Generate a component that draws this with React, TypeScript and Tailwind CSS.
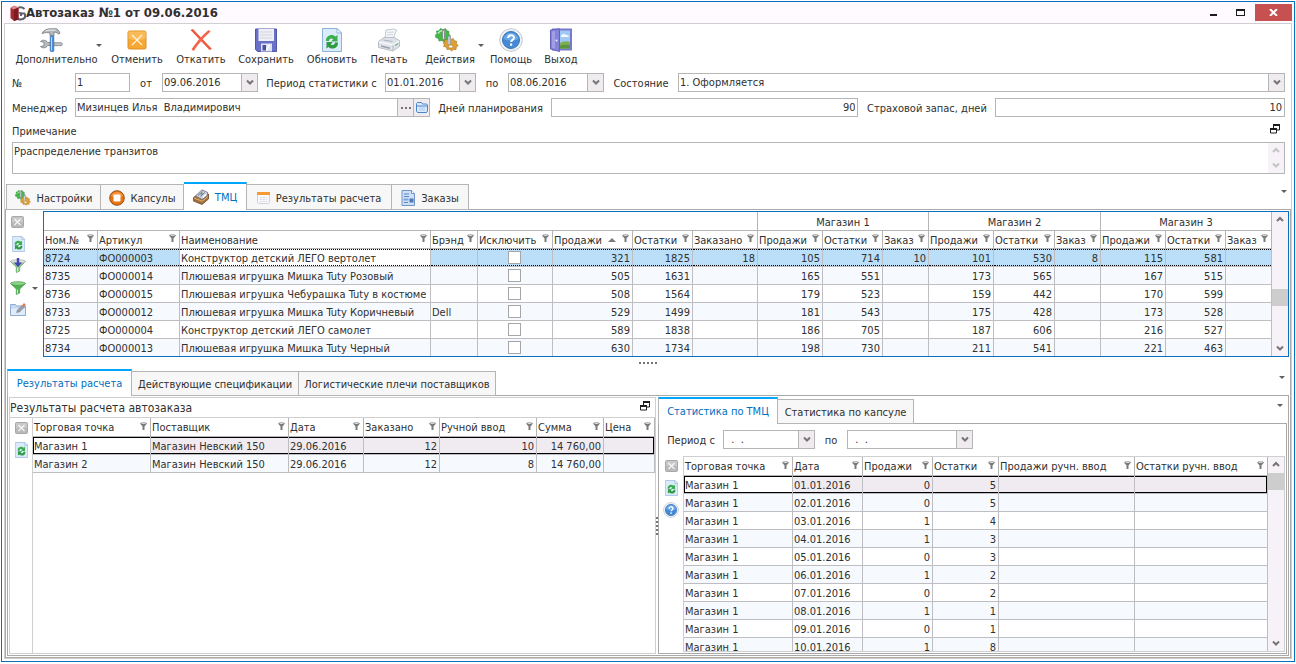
import { useState } from "react";
import type { ReactNode } from "react";

interface Column {
  title: string;
  width: string;
  align?: "right";
  sorted?: boolean;
}

const goodsColumns: Column[] = [
  { title: "Ном.№", width: "w-[54px]" },
  { title: "Артикул", width: "w-[82px]" },
  { title: "Наименование", width: "w-auto" },
  { title: "Брэнд", width: "w-[47px]" },
  { title: "Исключить", width: "w-[75px]" },
  { title: "Продажи", width: "w-[80px]", align: "right", sorted: true },
  { title: "Остатки", width: "w-[60px]", align: "right" },
  { title: "Заказано", width: "w-[65px]", align: "right" },
  { title: "Продажи", width: "w-[65px]", align: "right" },
  { title: "Остатки", width: "w-[60px]", align: "right" },
  { title: "Заказ", width: "w-[46px]", align: "right" },
  { title: "Продажи", width: "w-[65px]", align: "right" },
  { title: "Остатки", width: "w-[61px]", align: "right" },
  { title: "Заказ", width: "w-[46px]", align: "right" },
  { title: "Продажи", width: "w-[65px]", align: "right" },
  { title: "Остатки", width: "w-[60px]", align: "right" },
  { title: "Заказ", width: "w-[46px]", align: "right" },
];

// the fifth value is the "Исключить" tick box
const goodsRows: string[][] = [
  ["8724", "ФО000003", "Конструктор детский ЛЕГО вертолет", "", "", "321", "1825", "18", "105", "714", "10", "101", "530", "8", "115", "581", ""],
  ["8735", "ФО000014", "Плюшевая игрушка Мишка Tuty Розовый", "", "", "505", "1631", "", "165", "551", "", "173", "565", "", "167", "515", ""],
  ["8736", "ФО000015", "Плюшевая игрушка Чебурашка Tuty в костюме", "", "", "508", "1564", "", "179", "523", "", "159", "442", "", "170", "599", ""],
  ["8733", "ФО000012", "Плюшевая игрушка Мишка Tuty Коричневый", "Dell", "", "529", "1499", "", "181", "543", "", "175", "428", "", "173", "528", ""],
  ["8725", "ФО000004", "Конструктор детский ЛЕГО самолет", "", "", "589", "1838", "", "186", "705", "", "187", "606", "", "216", "527", ""],
  ["8734", "ФО000013", "Плюшевая игрушка Мишка Tuty Черный", "", "", "630", "1734", "", "198", "730", "", "211", "541", "", "221", "463", ""],
];

const resultColumns: Column[] = [
  { title: "Торговая точка", width: "w-[118px]" },
  { title: "Поставщик", width: "w-auto" },
  { title: "Дата", width: "w-[75px]" },
  { title: "Заказано", width: "w-[76px]", align: "right" },
  { title: "Ручной ввод", width: "w-[97px]", align: "right" },
  { title: "Сумма", width: "w-[67px]", align: "right" },
  { title: "Цена", width: "w-[51px]", align: "right" },
];

const resultRows: string[][] = [
  ["Магазин 1", "Магазин Невский 150", "29.06.2016", "12", "10", "14 760,00", ""],
  ["Магазин 2", "Магазин Невский 150", "29.06.2016", "12", "8", "14 760,00", ""],
];

const statColumns: Column[] = [
  { title: "Торговая точка", width: "w-[109px]" },
  { title: "Дата", width: "w-[70px]" },
  { title: "Продажи", width: "w-[70px]", align: "right" },
  { title: "Остатки", width: "w-[66px]", align: "right" },
  { title: "Продажи ручн. ввод", width: "w-[136px]", align: "right" },
  { title: "Остатки ручн. ввод", width: "w-auto", align: "right" },
];

const statRows: string[][] = [
  ["Магазин 1", "01.01.2016", "0", "5", "", ""],
  ["Магазин 1", "02.01.2016", "0", "5", "", ""],
  ["Магазин 1", "03.01.2016", "1", "4", "", ""],
  ["Магазин 1", "04.01.2016", "1", "3", "", ""],
  ["Магазин 1", "05.01.2016", "0", "3", "", ""],
  ["Магазин 1", "06.01.2016", "1", "2", "", ""],
  ["Магазин 1", "07.01.2016", "0", "2", "", ""],
  ["Магазин 1", "08.01.2016", "1", "1", "", ""],
  ["Магазин 1", "09.01.2016", "0", "1", "", ""],
  ["Магазин 1", "10.01.2016", "1", "8", "", ""],
];

/* ---------- icons ---------- */

function LogoIcon() {
  return (
    <svg width="16" height="16" viewBox="0 0 16 16">
      <path d="M14.500 4C13 2.500 10.500 2 8.500 2.500M15 8.500h-4v2.500M15 8.500v4c-2 2-5 2.300-7 1.500" fill="none" stroke="#59636b" strokeWidth="2" />
      <path d="M.5 3L4 .8l4.500 1.700v12L4 16 .5 13z" fill="#a3282f" />
      <path d="M.5 3L4 .8l4.500 1.700L4 4.500z" fill="#d98a8d" />
      <path d="M4 4.500l4.500-2v12L4 16z" fill="#7d1c22" />
      <path d="M9 8h2.500" stroke="#59636b" strokeWidth="1.500" />
    </svg>
  );
}

function ToolsIcon() {
  return (
    <svg width="24" height="24" viewBox="0 0 24 24">
      <path d="M3 5.500C4.500 2.200 8 .8 11 .8h6c1.500 0 3 1.500 4 4.500l-1.500.7-2.500-1.800h-2V8H11V5.200C8.500 4.200 6.500 4.500 3 5.500z" fill="#b4b7ba" stroke="#75797d" strokeWidth=".8" />
      <path d="M6.500 3c2-1 6-1.200 10-.8" stroke="#f3f4f5" fill="none" />
      <rect x="11.200" y="8" width="3.600" height="15.500" rx="1" fill="#4a90dd" stroke="#2f66aa" strokeWidth=".7" />
      <path d="M12.500 9v13.500" stroke="#b2d8fb" strokeWidth="1" />
      <path d="M1.500 13.500c2-2 5.500-1.700 7.200 1h2.300v3H8.700c-1.700 2.800-5.200 3-7.200 1l3.500-.7v-3.500z" fill="#b9bcbf" stroke="#75797d" strokeWidth=".8" />
      <path d="M15 14.800h7.500c1 .5 1 2.300 0 2.800H15z" fill="#c9ccce" stroke="#75797d" strokeWidth=".8" />
    </svg>
  );
}

function CancelIcon() {
  return (
    <svg width="20" height="20" viewBox="0 0 20 20">
      <rect x="1" y="1" width="18" height="18" rx="1.500" fill="#f5a833" stroke="#e08f22" />
      <path d="M1.500 1.500h17v7c-5 2-12 2-17 0z" fill="#f9bb59" />
      <path d="M5 5l10 10M15 5L5 15" stroke="#fff3da" strokeWidth="1.300" />
    </svg>
  );
}

function RollbackIcon() {
  return (
    <svg width="24" height="24" viewBox="0 0 24 24">
      <path d="M1.500 2L4 1c5 5.500 13 13.500 19 20l-2.500 1C15 16 7 8 1.500 2z" fill="#f0593f" />
      <path d="M19.500 2l2 1.500C15.500 9 8.500 16.500 5 23l-2.500-1.500C6 15.500 13 7.500 19.500 2z" fill="#f4644a" />
    </svg>
  );
}

function SaveIcon() {
  return (
    <svg width="22" height="24" viewBox="0 0 22 24">
      <path d="M.5 1h21v22.500H2.500l-2-2z" fill="#6a70c8" stroke="#5057ad" />
      <rect x="3.500" y="1" width="15.500" height="12" fill="#eeeff4" />
      <path d="M5 4h12M5 7h12M5 10h12" stroke="#d3d4df" />
      <rect x="6" y="15.500" width="11" height="8" fill="#dfe1ee" />
      <path d="M7.500 17h3.500v5.500H7.500z" fill="#4a50a3" />
      <path d="M14.500 16.500l-3 6" stroke="#fff" strokeWidth="1.500" />
    </svg>
  );
}

function RefreshIcon({ className }: { className: string }) {
  return (
    <svg className={className} viewBox="0 0 20 24">
      <path d="M.5.500h14.500l4.500 4.500v18.500H.5z" fill="#dcebfa" stroke="#8fb2dc" />
      <path d="M15 .5V5h4.500z" fill="#fff" stroke="#8fb2dc" />
      <path d="M4 13c-.5-5.500 6-8 9.500-4.500L15.500 7v6.500H9.200l2-2.200c-1.800-1.700-4.200-.6-4.200 1.700z" fill="#3bae4e" />
      <path d="M16 14.500c.5 5.500-6 8-9.500 4.500l-2 1.500V14h6.300l-2 2.200c1.800 1.700 4.200.6 4.200-1.700z" fill="#2c9b41" />
    </svg>
  );
}

function PrintIcon() {
  return (
    <svg width="24" height="24" viewBox="0 0 24 24">
      <path d="M9 2l8-1 3 1.500-1.500 1.500L16 12l-8-1z" fill="#f4f6fa" stroke="#b2bac5" strokeWidth=".8" />
      <path d="M10.500 4.500l6-.5M10 7l6-.5" stroke="#cfd5de" />
      <path d="M1.500 13.500L7 9.500h10l5.500 3v6L16 23 1.500 19.500z" fill="#dfe3e9" stroke="#a9b1bc" strokeWidth=".8" />
      <path d="M2 14l14 3 6-4" fill="none" stroke="#fff" />
      <path d="M16 17v6" stroke="#b5bcc6" />
      <path d="M4 17.200l9 2.300v1.500l-9-2.300z" fill="#96a0ac" />
      <path d="M6.500 12l9 1.500" stroke="#aab3bd" />
      <path d="M18 17.500l3-2" stroke="#6dbd78" strokeWidth="1.500" />
    </svg>
  );
}

function GearsIcon({ className }: { className: string }) {
  return (
    <svg className={className} viewBox="0 0 24 24">
      <path d="M.5 7l1.500-1.500L1.500 3l2.500-.2L5.500.5 8 1.800 10.500.5l1.500 2.300 2 .7-.2 2.500L15.500 8l-1.500 1.800-.5 2.700-2.500-.2L9 14l-2-1.500-3 .5-.5-2.500L.8 9.500z" fill="#45b649" stroke="#2b8a35" strokeWidth=".6" />
      <path d="M3 5.500c1.500-2.500 4-3 6-2.500" stroke="#b7eeb0" strokeWidth="1.500" fill="none" />
      <path d="M7 2.500L9.500 1l1.500 1v8l-2 1.500H7.500z" fill="#8a9295" />
      <path d="M8.500 3v8" stroke="#dfe3e4" strokeWidth="1" />
      <path d="M8 15l1.800-1-.3-2.300 2.500.2 1.600-2 2 1.500 2.700-.9 1 2.200 2.500.6-.5 2.500 2 1.700-2 1.500-.2 2.500-2.500-.1-2 1.600-1.900-1.700-2.700.3-.6-2.500L8.500 18.500l.8-2z" fill="#dda035" stroke="#aa7422" strokeWidth=".6" />
      <path d="M13.500 18.500c0-2 4.500-2 4.500 0s-4.500 2-4.500 0z" fill="#fff" stroke="#aa7422" strokeWidth=".7" />
      <path d="M13 8l2-.8 1 .8v7.500l-1.500 1H13z" fill="#9da4a8" />
      <path d="M14 9v7" stroke="#e8ebec" />
    </svg>
  );
}

function HelpIcon({ className }: { className: string }) {
  return (
    <svg className={className} viewBox="0 0 24 24">
      <circle cx="12" cy="12" r="11.300" fill="#f0f2f5" stroke="#c3c8ce" />
      <circle cx="12" cy="12" r="8.500" fill="#4389d6" stroke="#3a76bd" />
      <path d="M4.500 11a7.600 7.600 0 0 1 15 0c-4.500 2-10 2-15 0z" fill="#6ba7e6" />
      <path d="M9.200 10c0-3.800 5.800-3.600 5.800-.3 0 2.200-2.900 2.200-2.900 4.300" fill="none" stroke="#fff" strokeWidth="2" />
      <rect x="11" y="15.500" width="2.200" height="2.200" fill="#fff" />
    </svg>
  );
}

function ExitIcon() {
  return (
    <svg width="22" height="24" viewBox="0 0 22 24">
      <rect x="3" y="1.500" width="18" height="20" fill="#9fc9f5" stroke="#7a78cf" strokeWidth="2" />
      <path d="M11 8c1-2.500 4-2.500 5-1 2-.5 3 1 3 2h-8z" fill="#f4f9ff" />
      <path d="M9 15.500c4-2 7-3 11-1.500v6.500H9z" fill="#7dae55" />
      <path d="M9 18c4-1.500 7-1.500 11-1v3.500H9z" fill="#5c9440" />
      <path d="M.5 2L9.500.800v22.700L.5 21z" fill="#8683db" stroke="#6461b8" />
      <path d="M2 3.500l3-.5v17.500l-3-.5z" fill="#a19ee6" />
      <circle cx="6.500" cy="12.500" r="1" fill="#f2f1fc" />
    </svg>
  );
}

function StopIcon() {
  return (
    <svg width="16" height="16" viewBox="0 0 16 16">
      <circle cx="8" cy="8" r="7.300" fill="#e8750f" stroke="#8a4712" strokeWidth=".9" />
      <path d="M2 6a6.500 6.500 0 0 1 12 0c-4 2-8 2-12 0z" fill="#f9943a" />
      <rect x="4.500" y="4.500" width="7" height="7" rx="1" fill="#fff" />
    </svg>
  );
}

function GoodsIcon() {
  return (
    <svg width="16" height="16" viewBox="0 0 16 16">
      <path d="M.5 8.500L4 6l6 3 5.500-4v5L9 15.500.5 12z" fill="#a8703a" stroke="#6b4722" strokeWidth=".8" />
      <path d="M1 9l8.200 3.200L15 7.500" fill="none" stroke="#e0b37c" />
      <path d="M2.500 7L9 .8l5.500 2.500v3L9 10.500z" fill="#cdd2d9" stroke="#666d77" strokeWidth=".8" />
      <path d="M5 6.500l4.500-4M7.300 7.500l4.500-4" stroke="#7b71b8" />
      <path d="M10 8.500l3-3" stroke="#fff" strokeWidth="1.500" />
      <path d="M7.500 5.500l2-1.800" stroke="#5aa95c" strokeWidth="1.500" />
    </svg>
  );
}

function CalendarIcon() {
  return (
    <svg width="13" height="14" viewBox="0 0 13 14">
      <rect x=".5" y="1.500" width="12" height="11" rx="1" fill="#f8f8fa" stroke="#cfd2d8" />
      <path d="M0 1h13v3H0z" fill="#f59a32" />
      <path d="M3 6.500h7M3 8.500h7M3 10.500h7" stroke="#d3dae4" strokeDasharray="2 1" />
    </svg>
  );
}

function DocumentIcon() {
  return (
    <svg width="14" height="16" viewBox="0 0 14 16">
      <path d="M1 .5h9.500l3 3v12H1z" fill="#cfe0f6" stroke="#7094c8" />
      <path d="M10.500.5v3h3" fill="#fff" stroke="#7094c8" />
      <path d="M3 4h5M3 6.500h5M3 12.500h4" stroke="#5b86c4" />
      <path d="M2.500 8.500h5v2h-5z" fill="#7ba4dc" />
      <path d="M8.500 8.500h4v4h-4z" fill="#4f79b6" />
    </svg>
  );
}

function DeleteIcon() {
  return (
    <svg width="13" height="12" viewBox="0 0 13 12">
      <rect x=".5" y=".5" width="12" height="11" rx="1" fill="#b9b9b9" stroke="#a8a8a8" />
      <path d="M1 1h11v5H1z" fill="#c8c8c8" />
      <path d="M3.500 3l6 6M9.500 3l-6 6" stroke="#f7f7f7" strokeWidth="1.200" />
    </svg>
  );
}

function FunnelIcon({ arrow }: { arrow?: boolean }) {
  return (
    <svg width="16" height="16" viewBox="0 0 16 16">
      <path d="M.5 3.500L6.300 9v5.500l3.400-1.500V9l5.800-5.500z" fill={arrow ? "#9ecf9b" : "#4db351"} stroke="#4a9a4d" strokeWidth=".7" />
      <ellipse cx="8" cy="3.500" rx="7.500" ry="1.800" fill={arrow ? "#dde5dd" : "#8fd48c"} stroke={arrow ? "#a3aaa3" : "#4a9a4d"} strokeWidth=".7" />
      <path d="M7.500 9.500v4" stroke="#c6efc3" />
      {arrow && <path d="M6.800 0h2.400v4.500H12L8 9.200 4 4.500h2.800z" fill="#4147b5" />}
    </svg>
  );
}

function EditIcon() {
  return (
    <svg width="16" height="15" viewBox="0 0 16 15">
      <path d="M.5 13.500v-11h5l1 1.500h9v9.500z" fill="#c5d9f1" stroke="#8fabd2" />
      <path d="M1 6.500h14V13H1z" fill="#dfecfb" />
      <path d="M6.500 10.500l1-2.500 5-5 2 2-5 5z" fill="#98a0ab" stroke="#6e7783" strokeWidth=".5" />
      <path d="M12 3.500L14 1l1.800 1.800-1.800 2.200z" fill="#e07a4a" />
    </svg>
  );
}

function FolderIcon() {
  return (
    <svg width="12" height="11" viewBox="0 0 12 11">
      <path d="M.5 9V1.500l1-1h4l1 1.500h4l1 1V9l-1 1.500h-9z" fill="#dcebfb" stroke="#4a83cc" />
      <path d="M1 4h10" stroke="#4a83cc" />
      <path d="M3 6h6M3 8h6" stroke="#a9c8ee" />
    </svg>
  );
}

function RestoreIcon() {
  return (
    <svg width="11" height="10" viewBox="0 0 11 10">
      <path d="M3.500 4V1h6v5h-3" fill="none" stroke="#1c1c1c" />
      <path d="M3 1h7" stroke="#1c1c1c" strokeWidth="2" />
      <path d="M.5 4.500h6v4.500h-6z" fill="#fff" stroke="#1c1c1c" />
      <path d="M0 5h7" stroke="#1c1c1c" strokeWidth="2" />
    </svg>
  );
}

function FilterMark() {
  return (
    <svg width="7" height="8" viewBox="0 0 7 8" className="shrink-0 self-start">
      <path d="M0 1.500L1.500.5h4L7 1.500 4.500 4.500V8h-2V4.500z" fill="#7b7b7b" />
      <path d="M1.500 1.500h4" stroke="#d5d5d5" />
    </svg>
  );
}

function Triangle({ up }: { up?: boolean }) {
  return (
    <svg width={up ? 8 : 6} height={up ? 4 : 3} viewBox="0 0 6 3" preserveAspectRatio="none" className="shrink-0">
      <path d={up ? "M0 3h6L3 0z" : "M0 0h6L3 3z"} fill={up ? "#7b7b7b" : "#5f5f5f"} />
    </svg>
  );
}

function Chevron({ up, color = "#757575" }: { up?: boolean; color?: string }) {
  return (
    <svg width="8" height="7" viewBox="0 0 8 7" className="shrink-0">
      <path d={up ? "M1 5l3-3 3 3" : "M1 1.500l3 3 3-3"} fill="none" stroke={color} strokeWidth="2" />
    </svg>
  );
}

/* ---------- controls ---------- */

const fieldBox = "h-[19px] border border-[#b5b5b5] bg-white";

function DropButton({ label }: { label: string }) {
  return (
    <button aria-label={label} className="flex w-4 shrink-0 items-center justify-center border-l border-[#b5b5b5] bg-[#efebef]">
      <Chevron />
    </button>
  );
}

function DateField({ id, label, value, width }: { id: string; label: string; value: string; width: string }) {
  return (
    <div className={`flex ${fieldBox} ${width}`}>
      <input id={id} aria-label={label} defaultValue={value} className="w-full min-w-0 flex-1 pl-px outline-none" />
      <DropButton label={`${label}: календарь`} />
    </div>
  );
}

function ToolButton({ label, width, menu, children }: { label: string; width: string; menu?: boolean; children: ReactNode }) {
  return (
    <button className={`flex h-11 shrink-0 flex-col items-center ${width}`}>
      <span className={`grid h-[25px] w-full items-center ${menu ? "grid-cols-[3fr_auto_4fr]" : "grid-cols-[1fr_auto_1fr]"}`}>
        <span />
        {children}
        <span className="justify-self-end pt-3 pr-[2px]">{menu && <Triangle />}</span>
      </span>
      <span className="mt-px leading-[14px]">{label}</span>
    </button>
  );
}

interface TabItem {
  title: string;
  width: string;
  icon?: ReactNode;
}

interface TabBarProps {
  tabs: TabItem[];
  active: number;
  tall?: boolean;
  onSelect: (i: number) => void;
}

function TabBar({ tabs, active, tall, onSelect }: TabBarProps) {
  return (
    <div className={`flex items-end ${tall ? "h-[27px]" : "h-[26px]"}`}>
      <div role="tablist" className={`relative z-10 -mb-px flex items-end ${tall ? "h-[28px]" : "h-[27px]"}`}>
        {tabs.map((tab, i) => (
          <button
            key={tab.title}
            role="tab"
            aria-selected={i === active}
            onClick={() => onSelect(i)}
            className={`flex items-center justify-center gap-[6px] border-r border-[#b5b5b5] ${tab.width} ${
              i === active
                ? "h-full border-t-2 border-t-[#00a6f9] bg-white text-[#0070c0]"
                : `border-t border-b bg-[#f7f7f7] pt-[2px] ${tall ? "h-[26px]" : "h-[25px]"}`
            }`}
          >
            {tab.icon}
            <span className="pt-px">{tab.title}</span>
          </button>
        ))}
      </div>
      <button aria-label="Список вкладок" className="mr-1 mb-4 ml-auto">
        <Triangle />
      </button>
    </div>
  );
}

function ScrollBar({ thumb }: { thumb: string }) {
  return (
    <div className="flex w-4 shrink-0 flex-col items-center justify-between bg-[#f7f2f7] py-1">
      <Chevron up />
      <div className={`flex w-full flex-1 flex-col ${thumb}`}>
        <div className="h-[17px] bg-[#cdcdcd]" />
      </div>
      <Chevron />
    </div>
  );
}

function HeaderCell({ column }: { column: Column }) {
  return (
    <th className="border-r border-b border-[#b5b5b5] bg-white p-0 font-normal">
      <div className="flex h-[17px] items-center pr-[3px] pl-px">
        <span className="flex-1 pt-[2px] text-left whitespace-nowrap">{column.title}</span>
        {column.sorted && (
          <span className="pr-[6px]">
            <Triangle up />
          </span>
        )}
        <span className="flex h-full pt-[3px]">
          <FilterMark />
        </span>
      </div>
    </th>
  );
}

function GoodsTable() {
  return (
    <table className="w-full table-fixed border-separate border-spacing-0">
      <colgroup>
        {goodsColumns.map((column, i) => (
          <col key={i} className={column.width} />
        ))}
      </colgroup>
      <thead>
        <tr className="h-[19px]">
          <th colSpan={8} className="border-r border-b border-[#b5b5b5] p-0" />
          {["Магазин 1", "Магазин 2", "Магазин 3"].map((shop) => (
            <th key={shop} colSpan={3} className="border-r border-b border-[#b5b5b5] p-0 pt-[3px] font-normal">
              {shop}
            </th>
          ))}
        </tr>
        <tr>
          {goodsColumns.map((column, i) => (
            <HeaderCell key={i} column={column} />
          ))}
        </tr>
      </thead>
      <tbody>
        {goodsRows.map((row, r) => (
          <tr key={row[0]} className={r === 0 ? "bg-[#bbdff8]" : r % 2 ? "bg-[#f6faff]" : "bg-white"}>
            {row.map((value, c) => (
              <td
                key={c}
                className={`border-r border-[#bdbdc2] p-0 ${r < goodsRows.length - 1 ? "border-b" : ""} ${
                  r === 0 && c === 2 ? "bg-white" : ""
                }`}
              >
                <div
                  className={`flex h-[17px] items-center pr-[2px] pl-px whitespace-nowrap ${
                    goodsColumns[c].align === "right" ? "justify-end" : ""
                  } ${r === 0 ? "border-y border-dotted border-black" : ""} ${c === 4 ? "" : "pt-[2px]"}`}
                >
                  {c === 4 ? (
                    <input
                      type="checkbox"
                      aria-label={`Исключить ${row[0]}`}
                      className="mx-auto size-[13px] appearance-none border border-[#a6a6a6] bg-white checked:bg-[#0070c0]"
                    />
                  ) : (
                    value
                  )}
                </div>
              </td>
            ))}
          </tr>
        ))}
      </tbody>
    </table>
  );
}

function PlainTable({ columns, rows }: { columns: Column[]; rows: string[][] }) {
  return (
    <table className="w-full table-fixed border-separate border-spacing-0">
      <colgroup>
        {columns.map((column) => (
          <col key={column.title} className={column.width} />
        ))}
      </colgroup>
      <thead>
        <tr className="h-[19px]">
          {columns.map((column) => (
            <HeaderCell key={column.title} column={column} />
          ))}
        </tr>
      </thead>
      <tbody>
        {rows.map((row, r) => (
          <tr key={r} className={r === 0 ? "bg-[#f0ebf0]" : r % 2 ? "bg-[#f6faff]" : "bg-white"}>
            {row.map((value, c) => (
              <td key={c} className={`border-r border-b border-[#bdbdc2] p-0 ${r === 0 && c === 0 ? "bg-white" : ""}`}>
                <div
                  className={`flex h-[17px] items-center pt-[2px] pr-[2px] whitespace-nowrap ${
                    columns[c].align === "right" ? "justify-end" : ""
                  } ${r === 0 ? "border-y border-black" : ""} ${r === 0 && c === 0 ? "border-l" : "pl-px"} ${
                    r === 0 && c === row.length - 1 ? "border-r" : ""
                  }`}
                >
                  {value}
                </div>
              </td>
            ))}
          </tr>
        ))}
      </tbody>
    </table>
  );
}

/* ---------- page ---------- */

function TitleBar() {
  return (
    <header className="mx-[2px] flex h-[22px] items-center border-b border-[#d0d0d0] bg-[#fffaff] pl-[6px]">
      <LogoIcon />
      <h1 className="flex-1 text-[13px] leading-4 font-bold">Автозаказ №1 от 09.06.2016</h1>
      <button aria-label="Свернуть" className="flex h-full w-[26px] items-center justify-center">
        <span className="mt-1 h-[2px] w-[7px] bg-[#1c1c1c]" />
      </button>
      <button aria-label="Развернуть" className="flex h-full w-[28px] items-center justify-center">
        <span className="h-[7px] w-[9px] border border-t-2 border-[#1c1c1c]" />
      </button>
      <button aria-label="Закрыть" className="ml-[1px] flex h-[17px] w-[37px] items-center justify-center bg-[#c75050]">
        <svg width="9" height="7" viewBox="0 0 9 7">
          <path d="M1 0l7 7M8 0L1 7" stroke="#fff" strokeWidth="2" />
        </svg>
      </button>
    </header>
  );
}

function Toolbar() {
  return (
    <div className="flex pt-[3px] pl-1">
      <ToolButton label="Дополнительно" width="w-[95px]" menu><ToolsIcon /></ToolButton>
      <ToolButton label="Отменить" width="w-[66px]"><CancelIcon /></ToolButton>
      <ToolButton label="Откатить" width="w-[62px]"><RollbackIcon /></ToolButton>
      <ToolButton label="Сохранить" width="w-[68px]"><SaveIcon /></ToolButton>
      <ToolButton label="Обновить" width="w-[64px]"><RefreshIcon className="h-6 w-5" /></ToolButton>
      <ToolButton label="Печать" width="w-[50px]"><PrintIcon /></ToolButton>
      <ToolButton label="Действия" width="w-[72px]" menu><GearsIcon className="size-6" /></ToolButton>
      <ToolButton label="Помощь" width="w-[50px]"><HelpIcon className="size-6" /></ToolButton>
      <ToolButton label="Выход" width="w-[50px]"><ExitIcon /></ToolButton>
    </div>
  );
}

function OrderForm() {
  return (
    <div className="flex flex-col pt-[2px] pr-[6px] pl-[7px]">
      <div className="flex items-center">
        <label htmlFor="number" className="w-[63px] pt-[2px]">№</label>
        <input id="number" defaultValue="1" className={`w-[55px] pl-px outline-none ${fieldBox}`} />
        <label htmlFor="date" className="w-[32px] pt-[2px] text-center">от</label>
        <DateField id="date" label="Дата заказа" value="09.06.2016" width="w-[96px]" />
        <label htmlFor="from" className="w-[127px] pt-[2px] text-center whitespace-nowrap">Период статистики с</label>
        <DateField id="from" label="Период с" value="01.01.2016" width="w-[91px]" />
        <label htmlFor="to" className="w-[32px] pt-[2px] text-center">по</label>
        <DateField id="to" label="Период по" value="08.06.2016" width="w-[96px]" />
        <label htmlFor="state" className="w-[74px] pt-[2px] text-center">Состояние</label>
        <div className={`flex min-w-0 flex-1 ${fieldBox}`}>
          <select id="state" className="min-w-0 flex-1 appearance-none pl-px outline-none">
            <option>1. Оформляется</option>
          </select>
          <DropButton label="Открыть список состояний" />
        </div>
      </div>

      <div className="mt-[6px] grid grid-cols-[63px_355px_121px_308fr_137px_290fr] items-center">
        <label htmlFor="manager" className="pt-[2px]">Менеджер</label>
        <div className={`flex ${fieldBox}`}>
          <input id="manager" defaultValue="Мизинцев Илья  Владимирович" className="min-w-0 flex-1 pl-px outline-none" />
          <button aria-label="Выбрать" className="flex w-4 items-center justify-center gap-[2px] border-l border-[#b5b5b5] bg-[#efebef]">
            <span className="size-[2px] bg-[#757575]" />
            <span className="size-[2px] bg-[#757575]" />
            <span className="size-[2px] bg-[#757575]" />
          </button>
          <button aria-label="Открыть карточку" className="flex w-4 items-center justify-center border-l border-[#b5b5b5] bg-[#efebef]">
            <FolderIcon />
          </button>
        </div>
        <label htmlFor="days" className="pt-[2px] text-center">Дней планирования</label>
        <input id="days" defaultValue="90" className={`min-w-0 pr-[2px] text-right outline-none ${fieldBox}`} />
        <label htmlFor="stock" className="pt-[2px] text-center">Страховой запас, дней</label>
        <input id="stock" defaultValue="10" className={`min-w-0 pr-[2px] text-right outline-none ${fieldBox}`} />
      </div>

      <div className="mt-[7px] flex h-[18px] items-start justify-between pr-1">
        <label htmlFor="note" className="pt-px">Примечание</label>
        <button aria-label="Развернуть примечание"><RestoreIcon /></button>
      </div>
      <div className="flex h-8 border border-[#b5b5b5]">
        <textarea id="note" defaultValue="Рраспределение транзитов" className="flex-1 resize-none pt-px pl-px leading-4 outline-none" />
        <div className="flex w-4 flex-col items-center justify-between bg-[#f7f2f7] py-1">
          <Chevron up color="#c4c4c4" />
          <Chevron color="#c4c4c4" />
        </div>
      </div>
    </div>
  );
}

function GoodsPanel() {
  return (
    <div className="flex h-[146px]">
      <div className="flex w-[37px] shrink-0 flex-col items-start gap-[6px] pt-[5px] pl-1">
        <button aria-label="Удалить" className="px-px"><DeleteIcon /></button>
        <button aria-label="Обновить" className="px-[2px] pt-[2px]"><RefreshIcon className="h-4 w-[13px]" /></button>
        <button aria-label="Загрузить отбор"><FunnelIcon arrow /></button>
        <button aria-label="Отбор" className="flex w-full items-center justify-between pr-[5px]">
          <FunnelIcon />
          <Triangle />
        </button>
        <button aria-label="Изменить"><EditIcon /></button>
      </div>
      <div className="flex min-w-0 flex-1 border border-[#0a6fbd]">
        <div className="min-w-0 flex-1 overflow-hidden">
          <GoodsTable />
        </div>
        <ScrollBar thumb="pt-[66px]" />
      </div>
    </div>
  );
}

function ResultPane() {
  return (
    <section className="flex w-[647px] shrink-0 flex-col border border-[#cfcfcf]">
      <div className="flex h-[20px] items-center justify-between border-b border-[#cfcfcf] pr-1">
        <h2 className="text-[12px] leading-4">Результаты расчета автозаказа</h2>
        <button aria-label="Развернуть панель" className="-mt-1"><RestoreIcon /></button>
      </div>
      <div className="flex min-h-0 flex-1">
        <div className="flex w-[22px] shrink-0 flex-col items-center gap-2 pt-1">
          <button aria-label="Удалить"><DeleteIcon /></button>
          <button aria-label="Обновить"><RefreshIcon className="h-4 w-[13px]" /></button>
        </div>
        <div className="min-w-0 flex-1 border-l border-[#cfcfcf]">
          <PlainTable columns={resultColumns} rows={resultRows} />
        </div>
      </div>
    </section>
  );
}

function StatPane() {
  const [tab, setTab] = useState(0);
  return (
    <section className="flex min-w-0 flex-1 flex-col">
      <TabBar
        active={tab}
        onSelect={setTab}
        tabs={[
          { title: "Статистика по ТМЦ", width: "w-[120px] border-l" },
          { title: "Статистика по капсуле", width: "w-[136px]" },
        ]}
      />
      <div className="flex min-h-0 flex-1 flex-col border border-[#a9a9a9] pt-[6px] pb-px">
        <div className="flex items-center">
          <label htmlFor="stat-from" className="w-[64px] pt-[2px] text-center">Период с</label>
          <DateField id="stat-from" label="Период с" value="  .  ." width="w-[92px]" />
          <label htmlFor="stat-to" className="w-[32px] pt-[2px] text-center">по</label>
          <DateField id="stat-to" label="Период по" value="  .  ." width="w-[126px]" />
        </div>
        <div className="mt-[7px] flex min-h-0 flex-1">
          <div className="flex w-6 shrink-0 flex-col items-center gap-[6px] pt-1">
            <button aria-label="Удалить"><DeleteIcon /></button>
            <button aria-label="Обновить" className="pt-[2px]"><RefreshIcon className="h-4 w-[13px]" /></button>
            <button aria-label="Справка"><HelpIcon className="size-4" /></button>
          </div>
          <div className="mr-px flex min-w-0 flex-1 border border-[#cfcfcf]">
            <div className="min-w-0 flex-1 overflow-hidden">
              <PlainTable columns={statColumns} rows={statRows} />
            </div>
            <ScrollBar thumb="pt-[5px]" />
          </div>
        </div>
      </div>
    </section>
  );
}

export default function App() {
  const [mainTab, setMainTab] = useState(2);
  const [lowerTab, setLowerTab] = useState(0);
  const dots = [0, 1, 2, 3, 4];

  return (
    <div className="flex h-screen min-h-[600px] flex-col bg-white p-px pb-[2px] font-['DejaVu_Sans_Condensed','Noto_Sans',sans-serif] text-[11px] leading-[14px] text-[#303030]">
      <div className="flex min-h-0 flex-1 flex-col border border-[#0a6fbd] pb-[2px]">
        <TitleBar />
        <main className="mx-[2px] flex min-h-0 flex-1 flex-col border-x border-b border-[#cfcfcf]">
          <Toolbar />
          <OrderForm />
          <div className="pt-2 pl-px">
            <TabBar
              tall
              active={mainTab}
              onSelect={setMainTab}
              tabs={[
                { title: "Настройки", width: "w-[95px] border-l", icon: <GearsIcon className="size-4" /> },
                { title: "Капсулы", width: "w-[83px]", icon: <StopIcon /> },
                { title: "ТМЦ", width: "w-[63px]", icon: <GoodsIcon /> },
                { title: "Результаты расчета", width: "w-[145px]", icon: <CalendarIcon /> },
                { title: "Заказы", width: "w-[77px]", icon: <DocumentIcon /> },
              ]}
            />
          </div>
          <div className="flex min-h-0 flex-1 flex-col border border-[#a9a9a9] p-px pl-0">
            <GoodsPanel />
            <div className="flex h-3 items-center justify-center gap-[2px]">
              {dots.map((dot) => (
                <span key={dot} className="size-[2px] bg-[#757575]" />
              ))}
            </div>
            <div className="ml-px flex min-h-0 flex-1 flex-col">
              <TabBar
                active={lowerTab}
                onSelect={setLowerTab}
                tabs={[
                  { title: "Результаты расчета", width: "w-[125px] border-l" },
                  { title: "Действующие спецификации", width: "w-[167px]" },
                  { title: "Логистические плечи поставщиков", width: "w-[197px]" },
                ]}
              />
              <div className="flex min-h-0 flex-1 border border-[#a9a9a9] p-px">
                <ResultPane />
                <div className="flex w-[2px] shrink-0 flex-col items-center justify-center gap-[2px]">
                  {dots.map((dot) => (
                    <span key={dot} className="size-[2px] bg-[#757575]" />
                  ))}
                </div>
                <StatPane />
              </div>
            </div>
          </div>
        </main>
      </div>
    </div>
  );
}
